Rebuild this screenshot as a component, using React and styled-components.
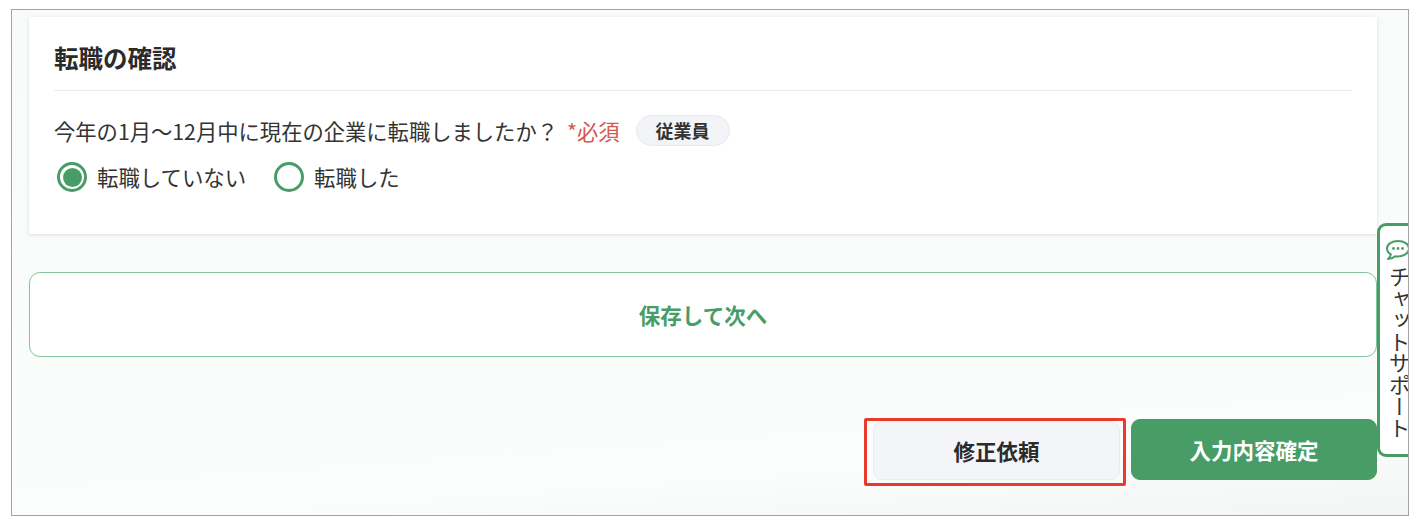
import React from "react";
import styled, { createGlobalStyle } from "styled-components";

const GlobalStyle = createGlobalStyle`
  html, body {
    margin: 0;
    padding: 0;
    background: #ffffff;
    font-family: "Noto Sans CJK JP", "Noto Sans", sans-serif;
    color: #2b2b2b;
  }
`;

const Frame = styled.div`
  position: relative;
  box-sizing: border-box;
  width: 1398px;
  height: 507px;
  margin: 9px 0 0 11px;
  padding: 7px 31px 0 17px;
  border: 1.5px solid #a3a3a3;
  overflow: hidden;
  background: linear-gradient(176deg, #f9fafa 0%, #fbfcfc 86%, #f3f4f4 100%);
`;

const Card = styled.section`
  box-sizing: border-box;
  height: 217px;
  padding: 23px 25px 0;
  background: #ffffff;
  box-shadow: 0 1px 4px rgba(0, 0, 0, 0.12);
`;

const CardTitle = styled.h2`
  margin: 0;
  padding-bottom: 14px;
  font-size: 24.5px;
  line-height: 36px;
  font-weight: 700;
  color: #2b2b2b;
  border-bottom: 1px solid #e9e9e9;
`;

const Question = styled.div`
  display: flex;
  align-items: center;
  margin-top: 23px;
  height: 32px;
  font-size: 21.3px;
  color: #333333;
`;

const Required = styled.span`
  margin-left: 9px;
  color: #d5584f;
`;

const Pill = styled.span`
  margin-left: 16px;
  box-sizing: border-box;
  width: 94px;
  height: 31px;
  display: flex;
  align-items: center;
  justify-content: center;
  font-size: 18px;
  font-weight: 700;
  background: #f3f4f8;
  border: 1px solid #e8e9ef;
  border-radius: 16px;
`;

const RadioRow = styled.div`
  display: flex;
  align-items: center;
  margin: 15px 0 0 3px;
  gap: 28px;
`;

const RadioItem = styled.label`
  display: flex;
  align-items: center;
  gap: 10px;
  font-size: 21.4px;
  line-height: 32px;
  color: #333333;
`;

const RadioMark = styled.span`
  box-sizing: border-box;
  width: 30px;
  height: 30px;
  padding: 2.5px;
  border: 3px solid #489d67;
  border-radius: 50%;
  background-clip: content-box;
  background-color: ${(p) => (p.$checked ? "#489d67" : "transparent")};
`;

const SaveButton = styled.button`
  display: block;
  box-sizing: border-box;
  width: 100%;
  height: 85px;
  margin-top: 38px;
  padding: 0;
  font-family: inherit;
  font-size: 21.5px;
  font-weight: 700;
  color: #489d67;
  background: #ffffff;
  border: 1.5px solid #82c49d;
  border-radius: 11px;
`;

const Actions = styled.div`
  display: flex;
  justify-content: flex-end;
  align-items: flex-start;
  margin-top: 61px;
  gap: 5px;
`;

const Highlight = styled.div`
  box-sizing: border-box;
  width: 262px;
  height: 68px;
  padding: 0 3px 0 6px;
  border: 3px solid #ea3a2d;
  border-radius: 2px;
`;

const ActionButton = styled.button`
  display: block;
  box-sizing: border-box;
  width: ${(p) => p.$width}px;
  height: ${(p) => p.$height}px;
  margin-top: ${(p) => (p.$primary ? "1px" : "0")};
  padding: 0;
  font-family: inherit;
  font-size: 21.5px;
  font-weight: 700;
  color: ${(p) => (p.$primary ? "#ffffff" : "#2b2b2b")};
  background: ${(p) => (p.$primary ? "#489d67" : "#f4f5f9")};
  border: 1px solid ${(p) => (p.$primary ? "#489d67" : "#ebecf0")};
  border-radius: 9px;
`;

const ChatTab = styled.aside`
  position: absolute;
  top: 213px;
  left: 1365px;
  box-sizing: border-box;
  width: 48px;
  height: 234px;
  padding: 13px 0 0 5px;
  background: #ffffff;
  border: 3px solid #489d67;
  border-radius: 9px 0 0 9px;
`;

const ChatIcon = styled.svg`
  display: block;
  width: 26px;
  height: 22px;
`;

const ChatLabel = styled.div`
  writing-mode: vertical-rl;
  margin: 5px 0 0 2px;
  font-size: 21.6px;
  line-height: 24px;
  color: #333333;
`;

function App() {
  return (
    <>
      <GlobalStyle />
      <Frame>
        <Card>
          <CardTitle>転職の確認</CardTitle>
          <Question>
            今年の1月〜12月中に現在の企業に転職しましたか？
            <Required>*必須</Required>
            <Pill>従業員</Pill>
          </Question>
          <RadioRow>
            <RadioItem>
              <RadioMark $checked />
              転職していない
            </RadioItem>
            <RadioItem>
              <RadioMark />
              転職した
            </RadioItem>
          </RadioRow>
        </Card>
        <SaveButton>保存して次へ</SaveButton>
        <Actions>
          <Highlight>
            <ActionButton $width={247} $height={59}>修正依頼</ActionButton>
          </Highlight>
          <ActionButton $primary $width={246} $height={61}>入力内容確定</ActionButton>
        </Actions>
        <ChatTab>
          <ChatIcon viewBox="0 0 26 22" fill="none">
            <path
              d="M13 2C6.9 2 2 5.200 2 9.500c0 2.400 1.500 4.500 3.900 5.900-.2 1.500-1.200 3.100-2.900 4.600 3-.2 5.500-1.200 7.100-2.800.9.100 1.900.200 2.900.200 6.100 0 11-3.400 11-7.900S19.100 2 13 2z"
              stroke="#489d67"
              strokeWidth="2"
              strokeLinejoin="round"
            />
            <circle cx="8.500" cy="9.500" r="1.400" fill="#489d67" />
            <circle cx="13" cy="9.500" r="1.400" fill="#489d67" />
            <circle cx="17.500" cy="9.500" r="1.400" fill="#489d67" />
          </ChatIcon>
          <ChatLabel>チャットサポート</ChatLabel>
        </ChatTab>
      </Frame>
    </>
  );
}

export default App;
